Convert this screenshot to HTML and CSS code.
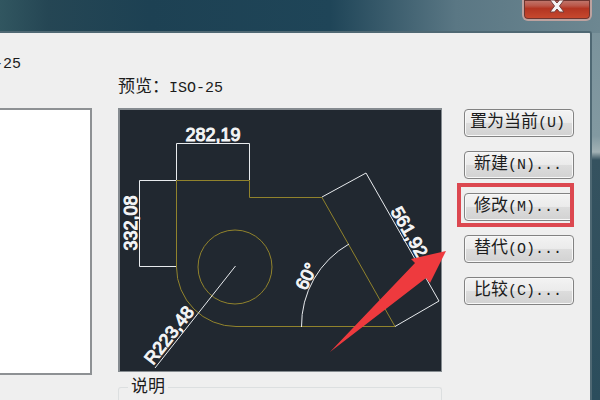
FILE: index.html
```html
<!DOCTYPE html>
<html lang="zh-CN">
<head>
<meta charset="utf-8">
<title>ISO-25</title>
<link rel="stylesheet" href="styles.css">
</head>
<body>
<div class="window">
  <header class="titlebar">
    <button class="close" type="button" aria-label="关闭">
      <svg width="18" height="14" viewBox="0 0 18 14"><path d="M2 0H6.500L9 3L11.500 0H16L11.500 6L16 12H11.500L9 9L6.500 12H2L6.500 6Z" fill="#f4f4f4" stroke="#753c38" stroke-width="1"/></svg>
    </button>
  </header>
  <main class="client">
    <p class="current"><span class="latin">-25</span></p>
    <div class="columns">
      <div class="styles-list"></div>
      <section class="preview">
        <h2 class="label">预览：<span class="latin">ISO-25</span></h2>
        <svg class="drawing" viewBox="118 108 324 264">
          <rect x="118" y="108" width="324" height="264" fill="#858b90"/>
          <rect x="120" y="110" width="321" height="261" fill="#212830"/>
          <g class="shape">
            <path d="M176.500 180.500H249.500V197.500H322L395 326.500H236A59.500 59.500 0 0 1 176.500 267Z"/>
            <circle cx="235" cy="267" r="37"/>
          </g>
          <g class="dimension">
            <path d="M176.500 180V143.500H249.500V180"/>
            <path d="M176 180.500H139.500V266.500H176"/>
            <path d="M235.500 266L155 368"/>
            <path d="M322 197L366 173L439 301L395 326.500"/>
            <path d="M301.500 327A94 94 0 0 1 349 244"/>
          </g>
          <g class="figures">
            <text x="213" y="141">282,19</text>
            <text transform="translate(137 223) rotate(-90)">332,08</text>
            <text transform="translate(174 339) rotate(-52)">R223,48</text>
            <text transform="translate(404 235) rotate(60)">561,92</text>
            <text transform="translate(312 279) rotate(-64)">60°</text>
          </g>
          <path d="M330 352L415 263L411 259L446 251L430 283L426 278Z" fill="#ee3a3e"/>
        </svg>
        <fieldset class="group"><legend>说明</legend></fieldset>
      </section>
      <nav class="actions">
        <button type="button">置为当前<span class="latin">(U)</span></button>
        <button type="button">新建<span class="latin">(N)...</span></button>
        <button type="button" class="marked">修改<span class="latin">(M)...</span></button>
        <button type="button">替代<span class="latin">(O)...</span></button>
        <button type="button">比较<span class="latin">(C)...</span></button>
      </nav>
    </div>
  </main>
</div>
</body>
</html>
```
FILE: styles.css
```css
* {
  box-sizing: border-box;
}

body {
  margin: 0;
  overflow: hidden;
  color: #1c1c1c;
  font: 17px/20px "Liberation Sans", "Noto Sans CJK SC", sans-serif;
}

.window {
  display: flex;
  flex-direction: column;
  height: 100vh;
  padding-right: 8px;
  background:
    linear-gradient(90deg, #315660 0, #254654 8%, #1d4153 25%, #1f4558 55%, #5a7784 76%, #6d8791 100%) top / 100% 33px no-repeat,
    linear-gradient(#78919a 0, #8299a1 34%, #a3b2b5 38%, #35525f 40%, #2b4d5c 100%);
}

.titlebar {
  display: flex;
  flex: none;
  justify-content: flex-end;
  height: 31px;
}

.close {
  display: flex;
  justify-content: center;
  width: 70px;
  height: 21px;
  padding: 0;
  border: 2px solid #bda29f;
  border-top: 0;
  border-radius: 0 0 6px 6px;
  background: linear-gradient(#c17a70 0, #bb5749 30%, #b33522 45%, #c84a2f 100%);
  box-shadow: inset 0 0 0 1px #6d3530;
}

.client {
  flex: 1;
  padding: 20px 16px 0 0;
  border: solid #4f6873;
  border-width: 2px 2px 0 0;
  border-radius: 0 3px 0 0;
  background: #efefef;
}

.current,
.label {
  margin: 0;
  font-size: 17px;
  font-weight: 400;
}

.latin {
  font-family: "Liberation Mono", monospace;
  font-size: 15px;
}

.current {
  height: 20px;
  margin-left: -6px;
}

.columns {
  display: grid;
  grid-template-columns: 92px minmax(0, 1fr) 110px;
  align-items: start;
}

.styles-list {
  height: 267px;
  margin-top: 35px;
  border: solid #8e9194;
  border-width: 2px 2px 2px 0;
  background: #fff;
}

.preview {
  margin: 4px 22px 0 26px;
}

.label {
  height: 31px;
}

.drawing {
  display: block;
  position: relative;
  width: 100%;
  overflow: visible;
}

.shape {
  fill: none;
  stroke: #91832c;
  stroke-width: 1;
}

.dimension {
  fill: none;
  stroke: #e8ebee;
  stroke-width: 1;
}

.figures {
  fill: #f4f5f6;
  stroke: #f4f5f6;
  stroke-width: 1;
  font-family: "Liberation Sans", sans-serif;
  font-size: 18px;
  text-anchor: middle;
}

.group {
  height: 23px;
  margin: 5px 0 0;
  padding: 0 9px;
  border: 1px solid #dcdfe0;
  border-bottom: 0;
  border-radius: 3px 3px 0 0;
}

.group legend {
  padding: 0 3px;
}

.actions {
  display: grid;
  gap: 14px;
  margin-top: 36px;
}

.actions button {
  position: relative;
  height: 28px;
  padding: 0 9px;
  border: 1px solid #828282;
  border-radius: 4px;
  background: linear-gradient(#f3f3f3 0, #ebebeb 48%, #dcdcdc 52%, #d2d2d2 100%);
  box-shadow: inset 0 0 0 1px #f8f8f8;
  color: #1c1c1c;
  font: inherit;
  text-align: left;
  white-space: nowrap;
}

.actions button:first-child {
  padding: 0 5px;
}

.actions .marked::after {
  content: "";
  position: absolute;
  inset: -11px -1px -7px -8px;
  border: 4px solid #dc4850;
}
```
